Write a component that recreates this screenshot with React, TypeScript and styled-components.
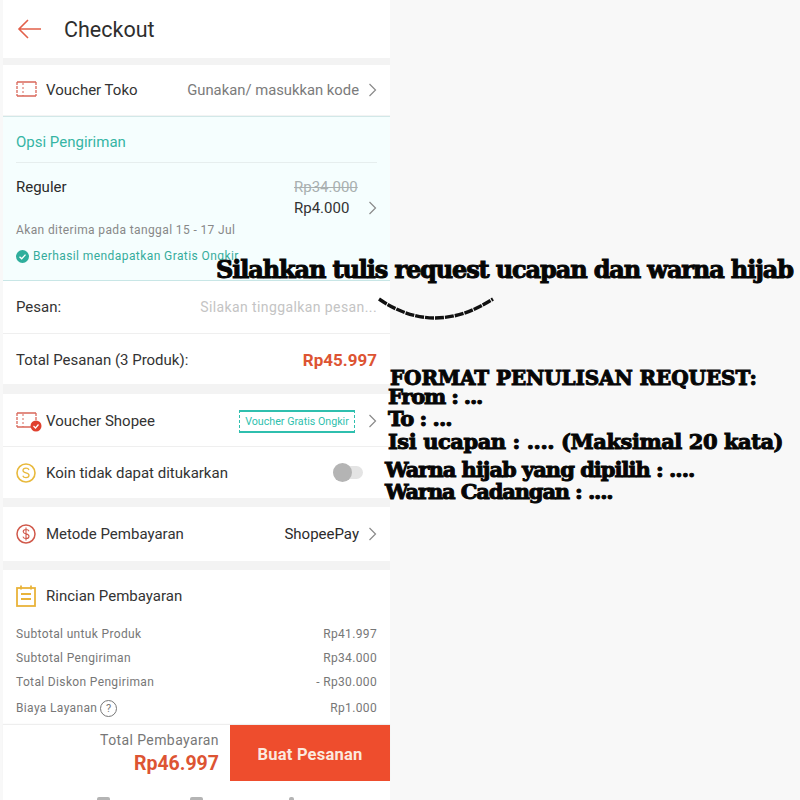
import React from "react";
import styled, { createGlobalStyle } from "styled-components";

const Global = createGlobalStyle`
  html, body { margin: 0; padding: 0; background: #f8f8f8; }
  body { font-family: Roboto, "Noto Sans", sans-serif; }
`;

const Page = styled.div`
  position: relative;
  width: 800px;
  height: 800px;
  overflow: hidden;
  background: #f8f8f8;
`;

const Phone = styled.div`
  width: 387px;
  height: 800px;
  margin-left: 3px;
  display: flex;
  flex-direction: column;
  background: #f3f3f3;
  color: #2b2b2b;
`;

const Header = styled.header`
  height: 58px;
  flex: none;
  display: flex;
  align-items: center;
  gap: 23px;
  padding-left: 14px;
  background: #fff;
  font-size: 21.5px;
  color: #2e2e2e;
`;

const Card = styled.section<{ $top?: number }>`
  flex: none;
  margin-top: ${(p) => p.$top ?? 0}px;
  background: #fff;
`;

const Row = styled.div<{ $h: number; $line?: boolean; $shift?: number }>`
  height: ${(p) => p.$h}px;
  box-sizing: border-box;
  display: flex;
  align-items: center;
  padding: ${(p) => (p.$shift && p.$shift > 0 ? p.$shift : 0)}px 13px
    ${(p) => (p.$shift && p.$shift < 0 ? -p.$shift : 0)}px;
  font-size: 15px;
  border-bottom: ${(p) => (p.$line ? "1px solid #efefef" : "none")};
`;

const IconSlot = styled.span`
  width: 30px;
  flex: none;
  display: flex;
  align-items: center;
  color: #d0483a;
`;

const Label = styled.span`
  flex: 1;
  color: #333;
`;

const Hint = styled.span`
  font-size: 14.8px;
  color: #7b7b7b;
`;

const Chevron = styled.svg`
  width: 9px;
  height: 14px;
  margin-left: 9px;
  flex: none;
  fill: none;
  stroke: #8a8a8a;
  stroke-width: 1.2;
`;

const Shipping = styled.section`
  flex: none;
  height: 165px;
  box-sizing: border-box;
  margin-top: 1px;
  padding: 0 13px;
  background: #f5fefe;
  border-top: 1px solid #d2e8e8;
  border-bottom: 1px solid #c8e6e6;
`;

const ShipTitle = styled.div`
  height: 46px;
  box-sizing: border-box;
  padding-top: 4px;
  display: flex;
  align-items: center;
  font-size: 15px;
  color: #35b5a4;
  border-bottom: 1px solid #e6eeee;
`;

const ShipBody = styled.div`
  display: flex;
  justify-content: space-between;
  padding-top: 15px;
  font-size: 15px;
`;

const Prices = styled.div`
  display: grid;
  grid-template-columns: 65px 18px;
  row-gap: 3px;
  line-height: 18px;
  justify-content: end;
  align-items: center;
`;

const OldPrice = styled.span`
  grid-column: 1;
  color: #a9b0b0;
  text-decoration: line-through;
  white-space: nowrap;
`;

const NewPrice = styled.span`
  grid-column: 1;
  white-space: nowrap;
  color: #333;
`;

const Eta = styled.div`
  margin-top: 6px;
  font-size: 12px;
  letter-spacing: 0.38px;
  color: #888;
`;

const Success = styled.div`
  display: flex;
  align-items: center;
  gap: 4px;
  margin-top: 12px;
  font-size: 12px;
  letter-spacing: 0.42px;
  color: #35ac9c;
  white-space: nowrap;
`;

const Placeholder = styled.span`
  font-size: 14px;
  letter-spacing: 0.4px;
  color: #c4c4c4;
`;

const Total = styled.span`
  font-size: 17px;
  font-weight: 700;
  color: #dd5433;
`;

const VoucherTag = styled.span`
  box-sizing: border-box;
  width: 116px;
  height: 23px;
  margin-right: 4px;
  display: flex;
  align-items: center;
  justify-content: center;
  font-size: 10.7px;
  white-space: nowrap;
  color: #2fbfae;
  border: 1px dashed #2fbfae;
  border-top: 2px solid #2fbfae;
  border-bottom: 2px solid #2fbfae;
`;

const Toggle = styled.span`
  position: relative;
  width: 30px;
  height: 13px;
  margin-right: 14px;
  border-radius: 7px;
  background: #e4e4e4;
`;

const Knob = styled.span`
  position: absolute;
  left: 0;
  top: -3px;
  width: 19px;
  height: 19px;
  border-radius: 50%;
  background: #b4b4b4;
`;

const Details = styled.div`
  display: flex;
  flex-direction: column;
  padding: 0 13px 3px;
`;

const DetailRow = styled.div<{ $h: number }>`
  height: ${(p) => p.$h}px;
  display: flex;
  align-items: center;
  justify-content: space-between;
  font-size: 12px;
  letter-spacing: 0.35px;
  color: #777;
`;

const DetailName = styled.span`
  display: flex;
  align-items: center;
`;

const HelpMark = styled.span`
  display: inline-flex;
  align-items: center;
  justify-content: center;
  box-sizing: border-box;
  width: 17px;
  height: 17px;
  margin-left: 3px;
  border: 1px solid #777;
  border-radius: 50%;
  font-size: 11px;
`;

const Footer = styled.div`
  flex: none;
  height: 56px;
  display: flex;
  background: #fff;
  box-shadow: 0 -1px 1px #eee;
`;

const FooterTotal = styled.div`
  flex: 1;
  box-sizing: border-box;
  padding: 2px 11px 0 0;
  display: flex;
  flex-direction: column;
  align-items: flex-end;
  justify-content: center;
`;

const FooterLabel = styled.span`
  font-size: 14px;
  letter-spacing: 0.4px;
  line-height: 20px;
  color: #777;
`;

const FooterPrice = styled.span`
  font-size: 19.5px;
  font-weight: 700;
  line-height: 28px;
  color: #dd5433;
`;

const OrderButton = styled.button`
  width: 160px;
  border: 0;
  padding: 2px 0 0;
  background: #ee4d2d;
  color: #fbe9df;
  font-family: inherit;
  font-size: 16.5px;
  font-weight: 700;
  letter-spacing: 0.2px;
`;

const NavBar = styled.nav`
  flex: 1;
  background: #fff;
  position: relative;
`;

const NavMark = styled.span<{ $x: number; $w: number }>`
  position: absolute;
  left: ${(p) => p.$x}px;
  top: 16px;
  width: ${(p) => p.$w}px;
  height: 3px;
  background: #b4b4b4;
  border-radius: 2px 2px 0 0;
`;

const Note = styled.div<{ $x: number; $y: number; $size: number; $ls: number }>`
  position: absolute;
  left: ${(p) => p.$x}px;
  top: ${(p) => p.$y}px;
  font-family: "DejaVu Serif", serif;
  font-weight: 700;
  font-size: ${(p) => p.$size}px;
  letter-spacing: ${(p) => p.$ls}px;
  line-height: 0.85;
  color: #060606;
  white-space: nowrap;
  -webkit-text-stroke: 1px #060606;
`;

const Smile = styled.svg`
  position: absolute;
  left: 376px;
  top: 295px;
  width: 120px;
  height: 30px;
  fill: none;
  stroke: #111;
  stroke-width: 3.4;
  stroke-dasharray: 9 1;
`;

const ChevronIcon = () => (
  <Chevron viewBox="0 0 9 14">
    <path d="M1.5 1l6 6-6 6" />
  </Chevron>
);

const TicketIcon = ({ check }: { check?: boolean }) => (
  <svg width="26" height="22" viewBox="0 0 26 22" fill="none">
    <path d="M1 3h19M1 17h19" stroke="#d9675a" strokeWidth="1.3" />
    <path d="M1 3v14M20 3v14" stroke="#d9675a" strokeWidth="1.3" strokeDasharray="3 1" />
    <path d="M7 4v13" stroke="#d9675a" strokeWidth="1" strokeDasharray="2 2" />
    {check && <circle cx="20" cy="16" r="5.5" fill="#e0402e" />}
    {check && <path d="M17.500 16l2 2 3-3.500" stroke="#fff" strokeWidth="1.2" />}
  </svg>
);

const CoinIcon = () => (
  <svg width="20" height="20" viewBox="0 0 20 20" fill="none">
    <circle cx="10" cy="10" r="9" stroke="#e8b93c" strokeWidth="1.6" />
    <path d="M13 7c-.5-1.300-1.700-1.800-3-1.800-1.700 0-3 .8-3 2.300 0 3 6 1.700 6 4.800 0 1.500-1.400 2.400-3 2.400-1.500 0-2.800-.7-3.200-2" stroke="#e8b93c" strokeWidth="1.3" />
  </svg>
);

const DollarIcon = () => (
  <svg width="20" height="20" viewBox="0 0 20 20" fill="none">
    <circle cx="10" cy="10" r="9" stroke="#d0584a" strokeWidth="1.5" />
    <path d="M13 7.200c-.4-1.100-1.600-1.700-3-1.700-1.600 0-2.800.8-2.800 2.200 0 2.800 5.800 1.600 5.800 4.500 0 1.400-1.300 2.300-3 2.300-1.500 0-2.700-.7-3.100-1.900M10 3.500v13" stroke="#d0584a" strokeWidth="1.1" />
  </svg>
);

const ListIcon = () => (
  <svg width="20" height="22" viewBox="0 0 20 22" fill="none">
    <rect x="1" y="3" width="18" height="18" stroke="#e9b33a" strokeWidth="1.8" />
    <path d="M5 0.500v4M15 0.500v4M5 9h10M5 14h10" stroke="#e9b33a" strokeWidth="1.8" />
  </svg>
);

const CheckBadge = () => (
  <svg width="13" height="13" viewBox="0 0 13 13">
    <circle cx="6.500" cy="6.500" r="6.500" fill="#2fae9c" />
    <path d="M3.500 6.700l2.200 2.100 3.800-4.200" fill="none" stroke="#fff" strokeWidth="1.300" />
  </svg>
);

const BackArrow = () => (
  <svg width="24" height="20" viewBox="0 0 24 20" fill="none" stroke="#e2604a" strokeWidth="1.600">
    <path d="M24 10H2M11 1l-9 9 9 9" />
  </svg>
);

export default function App() {
  return (
    <Page>
      <Global />
      <Phone>
        <Header>
          <BackArrow />
          Checkout
        </Header>
        <Card $top={7}>
          <Row $h={50}>
            <IconSlot><TicketIcon /></IconSlot>
            <Label>Voucher Toko</Label>
            <Hint>Gunakan/ masukkan kode</Hint>
            <ChevronIcon />
          </Row>
        </Card>
        <Shipping>
          <ShipTitle>Opsi Pengiriman</ShipTitle>
          <ShipBody>
            <span>Reguler</span>
            <Prices>
              <OldPrice>Rp34.000</OldPrice>
              <span />
              <NewPrice>Rp4.000</NewPrice>
              <ChevronIcon />
            </Prices>
          </ShipBody>
          <Eta>Akan diterima pada tanggal 15 - 17 Jul</Eta>
          <Success>
            <CheckBadge />
            Berhasil mendapatkan Gratis Ongkir
          </Success>
        </Shipping>
        <Card>
          <Row $h={53} $line>
            <Label>Pesan:</Label>
            <Placeholder>Silakan tinggalkan pesan...</Placeholder>
          </Row>
          <Row $h={50} $shift={2}>
            <Label>Total Pesanan (3 Produk):</Label>
            <Total>Rp45.997</Total>
          </Row>
        </Card>
        <Card $top={10}>
          <Row $h={53} $line $shift={2}>
            <IconSlot><TicketIcon check /></IconSlot>
            <Label>Voucher Shopee</Label>
            <VoucherTag>Voucher Gratis Ongkir</VoucherTag>
            <ChevronIcon />
          </Row>
          <Row $h={51}>
            <IconSlot><CoinIcon /></IconSlot>
            <Label>Koin tidak dapat ditukarkan</Label>
            <Toggle><Knob /></Toggle>
          </Row>
        </Card>
        <Card $top={9}>
          <Row $h={54}>
            <IconSlot><DollarIcon /></IconSlot>
            <Label>Metode Pembayaran</Label>
            <span>ShopeePay</span>
            <ChevronIcon />
          </Row>
        </Card>
        <Card $top={9}>
          <Row $h={52} $shift={-1}>
            <IconSlot><ListIcon /></IconSlot>
            <Label>Rincian Pembayaran</Label>
          </Row>
          <Details>
            <DetailRow $h={24}><span>Subtotal untuk Produk</span><span>Rp41.997</span></DetailRow>
            <DetailRow $h={24}><span>Subtotal Pengiriman</span><span>Rp34.000</span></DetailRow>
            <DetailRow $h={24}><span>Total Diskon Pengiriman</span><span>- Rp30.000</span></DetailRow>
            <DetailRow $h={28}>
              <DetailName>Biaya Layanan<HelpMark>?</HelpMark></DetailName>
              <span>Rp1.000</span>
            </DetailRow>
          </Details>
        </Card>
        <Footer>
          <FooterTotal>
            <FooterLabel>Total Pembayaran</FooterLabel>
            <FooterPrice>Rp46.997</FooterPrice>
          </FooterTotal>
          <OrderButton>Buat Pesanan</OrderButton>
        </Footer>
        <NavBar>
          <NavMark $x={94} $w={13} />
          <NavMark $x={187} $w={13} />
          <NavMark $x={286} $w={5} />
        </NavBar>
      </Phone>
      <Note $x={216} $y={260} $size={24} $ls={-1.12}>Silahkan tulis request ucapan dan warna hijab</Note>
      <Smile viewBox="0 0 120 30">
        <path d="M3 4Q58 42 117 4" />
      </Smile>
      <Note $x={390} $y={370} $size={20} $ls={-0.1}>FORMAT PENULISAN REQUEST:</Note>
      <Note $x={388} $y={388} $size={21} $ls={-1.2}>From : ...</Note>
      <Note $x={388} $y={410} $size={21} $ls={-1}>To : ...</Note>
      <Note $x={388} $y={433} $size={21} $ls={-0.45}>Isi ucapan : .... (Maksimal 20 kata)</Note>
      <Note $x={385} $y={461} $size={21} $ls={-1}>Warna hijab yang dipilih : ....</Note>
      <Note $x={385} $y={483} $size={21} $ls={-1.15}>Warna Cadangan : ....</Note>
    </Page>
  );
}
